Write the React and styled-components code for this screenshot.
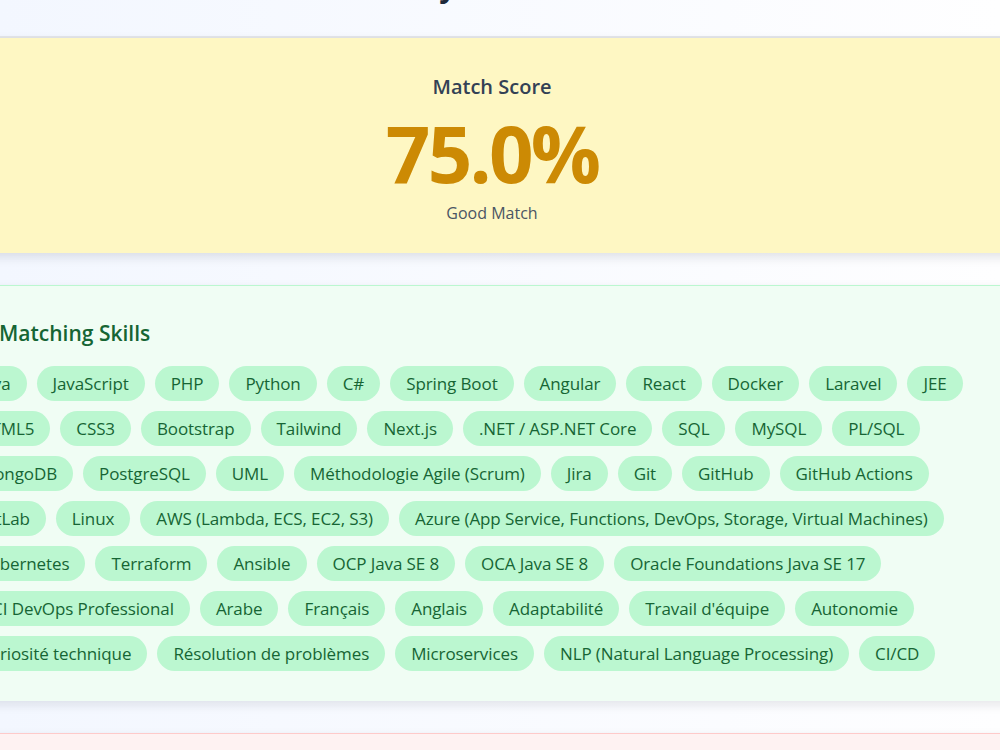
import React from "react";
import styled, { createGlobalStyle } from "styled-components";

const GlobalStyle = createGlobalStyle`
  html, body {
    margin: 0;
    padding: 0;
    overflow: hidden;
  }
  body {
    background: linear-gradient(to right, #f3f7ff, #fefeff);
    font-family: "Open Sans", "Noto Sans", sans-serif;
    color: #1e293b;
  }
`;

const Page = styled.div`
  width: 1122px;
  margin: -46px 0 0 -69px;
  display: flex;
  flex-direction: column;
`;

const Header = styled.header`
  display: flex;
  justify-content: center;
  padding: 14px 0 32px;
  border-bottom: 2px solid #e4e6ea;
`;

const Title = styled.h1`
  margin: 0;
  font-size: 30px;
  line-height: 36px;
  font-weight: 700;
  color: #1e293b;
`;

const Sections = styled.main`
  display: flex;
  flex-direction: column;
  gap: 32px;
`;

const ScoreCard = styled.section`
  background: #fef7c3;
  padding: 35px 32px 28px;
  display: flex;
  flex-direction: column;
  align-items: center;
  box-shadow: 0 4px 10px rgba(15, 23, 42, 0.12);
`;

const ScoreLabel = styled.h2`
  margin: 0;
  font-size: 20px;
  line-height: 28px;
  font-weight: 600;
  color: #334155;
`;

const ScoreValue = styled.div`
  margin-top: 4px;
  font-size: 78px;
  line-height: 96px;
  font-weight: 700;
  letter-spacing: -2.8px;
  color: #cc8a04;
`;

const ScoreVerdict = styled.div`
  font-size: 16px;
  line-height: 24px;
  color: #4b5563;
`;

const SkillCard = styled.section`
  background: ${(p) => p.$bg};
  border-top: 1px solid ${(p) => p.$border};
  padding: 33px 32px 30px;
  box-shadow: 0 4px 10px rgba(15, 23, 42, 0.1);
`;

const SkillHeading = styled.h3`
  margin: 0 0 19px;
  display: flex;
  align-items: center;
  gap: 12px;
  font-size: 21px;
  line-height: 28px;
  font-weight: 600;
  color: ${(p) => p.$color};
`;

const ChipList = styled.ul`
  list-style: none;
  margin: 0;
  padding: 0;
  display: flex;
  flex-wrap: wrap;
  gap: 10px;
`;

const Chip = styled.li`
  padding: 6px 16px;
  border-radius: 999px;
  background: ${(p) => p.$bg};
  color: ${(p) => p.$color};
  font-size: 17px;
  line-height: 23px;
  font-weight: 500;
  letter-spacing: -0.1px;
  white-space: nowrap;
`;

const matching = [
  "Java", "JavaScript", "PHP", "Python", "C#", "Spring Boot", "Angular", "React", "Docker", "Laravel", "JEE",
  "HTML5", "CSS3", "Bootstrap", "Tailwind", "Next.js", ".NET / ASP.NET Core", "SQL", "MySQL", "PL/SQL",
  "MongoDB", "PostgreSQL", "UML", "Méthodologie Agile (Scrum)", "Jira", "Git", "GitHub", "GitHub Actions",
  "GitLab", "Linux", "AWS (Lambda, ECS, EC2, S3)", "Azure (App Service, Functions, DevOps, Storage, Virtual Machines)",
  "Kubernetes", "Terraform", "Ansible", "OCP Java SE 8", "OCA Java SE 8", "Oracle Foundations Java SE 17",
  "OCI DevOps Professional", "Arabe", "Français", "Anglais", "Adaptabilité", "Travail d'équipe", "Autonomie",
  "Curiosité technique", "Résolution de problèmes", "Microservices", "NLP (Natural Language Processing)", "CI/CD",
];

const CheckIcon = () => (
  <svg width="24" height="24" viewBox="0 0 24 24" fill="none" stroke="currentColor" strokeWidth="2" strokeLinecap="round" strokeLinejoin="round">
    <circle cx="12" cy="12" r="10" />
    <path d="M8 12l3 3 5-6" />
  </svg>
);

export default function App() {
  return (
    <>
      <GlobalStyle />
      <Page>
        <Header>
          <Title>Analysis Results</Title>
        </Header>
        <Sections>
          <ScoreCard>
            <ScoreLabel>Match Score</ScoreLabel>
            <ScoreValue>75.0%</ScoreValue>
            <ScoreVerdict>Good Match</ScoreVerdict>
          </ScoreCard>
          <SkillCard $bg="#f0fdf4" $border="#bbf7d0">
            <SkillHeading $color="#166534">
              <CheckIcon />
              Matching Skills
            </SkillHeading>
            <ChipList>
              {matching.map((s) => (
                <Chip key={s} $bg="#bbf7d0" $color="#166534">{s}</Chip>
              ))}
            </ChipList>
          </SkillCard>
          <SkillCard $bg="#fef2f2" $border="#fecaca">
            <SkillHeading $color="#991b1b">Missing Skills</SkillHeading>
          </SkillCard>
        </Sections>
      </Page>
    </>
  );
}
